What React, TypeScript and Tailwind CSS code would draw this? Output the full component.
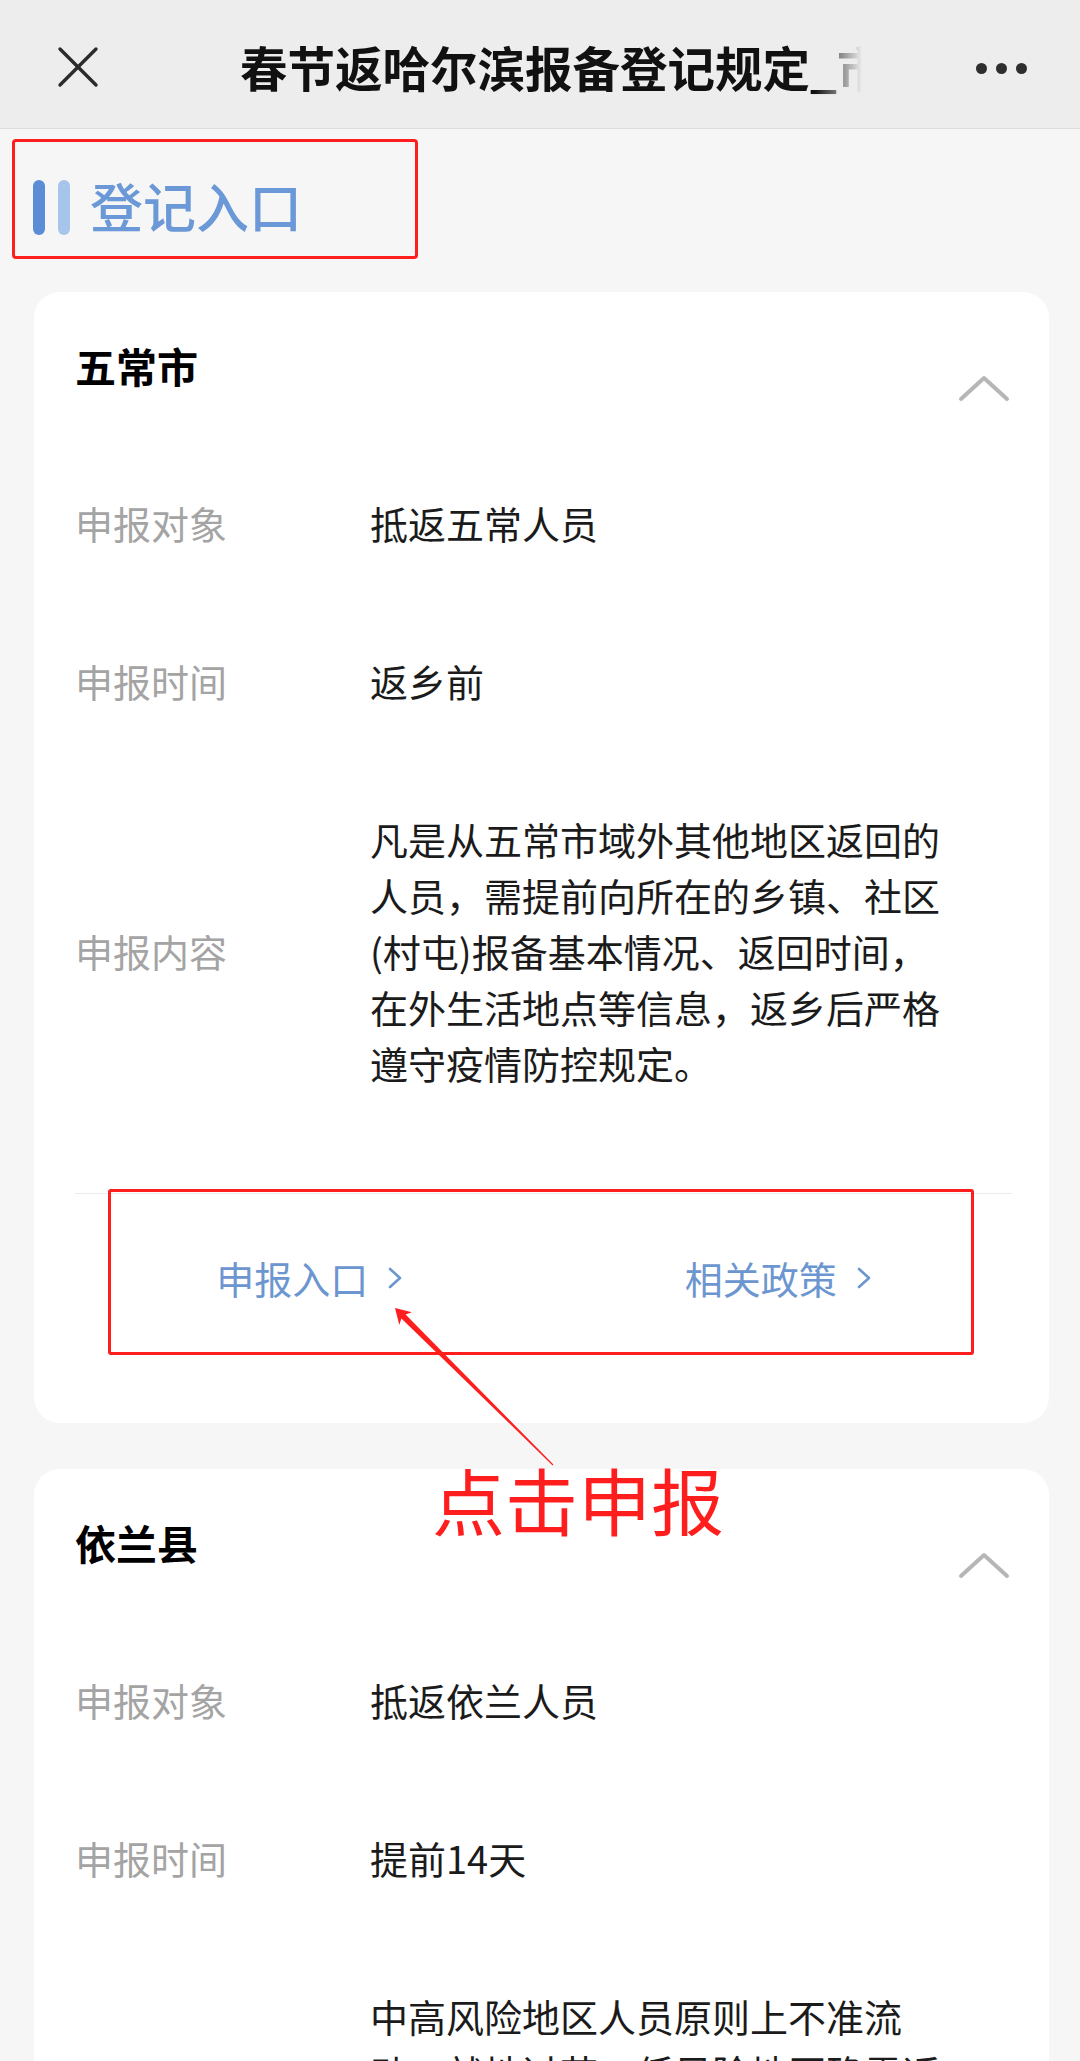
const cards = [
  {
    name: '五常市',
    target: '抵返五常人员',
    time: '返乡前',
    content: [
      '凡是从五常市域外其他地区返回的',
      '人员，需提前向所在的乡镇、社区',
      '(村屯)报备基本情况、返回时间，',
      '在外生活地点等信息，返乡后严格',
      '遵守疫情防控规定。',
    ],
  },
  {
    name: '依兰县',
    target: '抵返依兰人员',
    time: '提前14天',
    content: [
      '中高风险地区人员原则上不准流',
      '动，就地过节，低风险地区确需返',
      '乡的，需提前14天向所在社区报备',
      '个人信息及行程，抵达后按规定进',
      '行核酸检测。',
    ],
  },
];

function ChevronUp() {
  return (
    <svg width="52" height="28" viewBox="0 0 52 28" fill="none" className="mt-[38px] mr-[2px] shrink-0">
      <polyline points="3,24 26,3 49,24" stroke="#b6b6b6" strokeWidth="4" strokeLinecap="round" strokeLinejoin="round" />
    </svg>
  );
}

function LinkArrow() {
  return (
    <svg width="14" height="22" viewBox="0 0 14 22" fill="none" className="ml-[20px]">
      <polyline points="2,2 12,11 2,20" stroke="#6c96cf" strokeWidth="2.6" strokeLinecap="round" strokeLinejoin="round" />
    </svg>
  );
}

function Row({ label, children }: { label: string; children: React.ReactNode }) {
  return (
    <div className="flex items-center pt-[48px] pb-[54px] text-[38px] leading-[56px]">
      <div className="w-[295px] shrink-0 text-[#a4a4a4]">{label}</div>
      <div className="w-[590px] text-[#1b1b1b]">{children}</div>
    </div>
  );
}

function AreaCard({ card }: { card: (typeof cards)[number] }) {
  return (
    <div className="ml-[34px] mr-[31px] rounded-[26px] bg-white pl-[41px] pr-[37px]">
      <div className="flex h-[155px] items-start justify-between pt-[45px]">
        <h3 className="text-[41px] font-bold leading-[56px] text-black">{card.name}</h3>
        <ChevronUp />
      </div>
      <Row label="申报对象">{card.target}</Row>
      <Row label="申报时间">{card.time}</Row>
      <div className="mb-[48px]">
        <Row label="申报内容">
          {card.content.map((line, i) => (
            <div key={i} className="whitespace-nowrap">{line}</div>
          ))}
        </Row>
      </div>
      <div className="border-t border-[#ececec]" />
      <div className="flex pt-[56px] pb-[117px] text-[38px] leading-[56px] text-[#6c96cf]">
        <div className="flex flex-1 items-center justify-center">
          申报入口
          <LinkArrow />
        </div>
        <div className="flex flex-1 items-center justify-center">
          相关政策
          <LinkArrow />
        </div>
      </div>
    </div>
  );
}

export default function App() {
  return (
    <div className="relative min-h-screen overflow-hidden bg-[#f6f6f6] pb-[60px] font-['Noto_Sans_CJK_SC','Noto_Sans',sans-serif]">
      {/* title bar */}
      <header className="flex h-[129px] items-center border-b border-[#dedede] bg-[#ededed] pl-[57px] pr-[53px] pt-[6px]">
        <svg width="42" height="42" viewBox="0 0 42 42" fill="none" className="shrink-0">
          <line x1="3" y1="3" x2="39" y2="39" stroke="#2b2b2b" strokeWidth="3.4" strokeLinecap="round" />
          <line x1="39" y1="3" x2="3" y2="39" stroke="#2b2b2b" strokeWidth="3.4" strokeLinecap="round" />
        </svg>
        <div className="ml-[141px] w-[625px] overflow-hidden whitespace-nowrap text-[47.5px] font-semibold leading-[60px] text-[#111] [mask-image:linear-gradient(to_right,black_0,black_575px,transparent_622px)]">
          春节返哈尔滨报备登记规定_市政府发布返乡须知
        </div>
        <div className="ml-auto flex items-center gap-[9px] pt-[2px]">
          <span className="h-[11px] w-[11px] rounded-full bg-[#2e2e2e]" />
          <span className="h-[11px] w-[11px] rounded-full bg-[#2e2e2e]" />
          <span className="h-[11px] w-[11px] rounded-full bg-[#2e2e2e]" />
        </div>
      </header>

      {/* section heading */}
      <div className="flex h-[163px] items-start pl-[33px] pt-[51px]">
        <div className="flex items-center">
          <span className="h-[55px] w-[12px] rounded-full bg-[#5a8dd6]" />
          <span className="ml-[13px] h-[55px] w-[12px] rounded-full bg-[#a7c4ea]" />
          <h2 className="ml-[20px] -mt-[5px] text-[53px] font-medium leading-[56px] text-[#6b98d6]">登记入口</h2>
        </div>
      </div>

      <AreaCard card={cards[0]} />
      <div className="h-[46px]" />
      <AreaCard card={cards[1]} />

      {/* red markup drawn over the page */}
      <div className="absolute left-[12px] top-[139px] h-[120px] w-[406px] rounded-[4px] border-[3px] border-[#ff1e1e]" />
      <div className="absolute left-[108px] top-[1189px] h-[166px] w-[866px] rounded-[3px] border-[3px] border-[#ff1e1e]" />
      <svg width="190" height="185" viewBox="0 0 190 185" className="absolute left-[380px] top-[1295px]">
        <polygon
          points="15,13 31.9,17.2 25.6,19.4 173.4,169.6 172.6,170.4 21.4,23.6 19.3,30"
          fill="#ff1e1e"
        />
      </svg>
      <div className="absolute left-[432px] top-[1458px] text-[73px] leading-[80px] text-[#ff1e1e]">点击申报</div>
    </div>
  );
}
